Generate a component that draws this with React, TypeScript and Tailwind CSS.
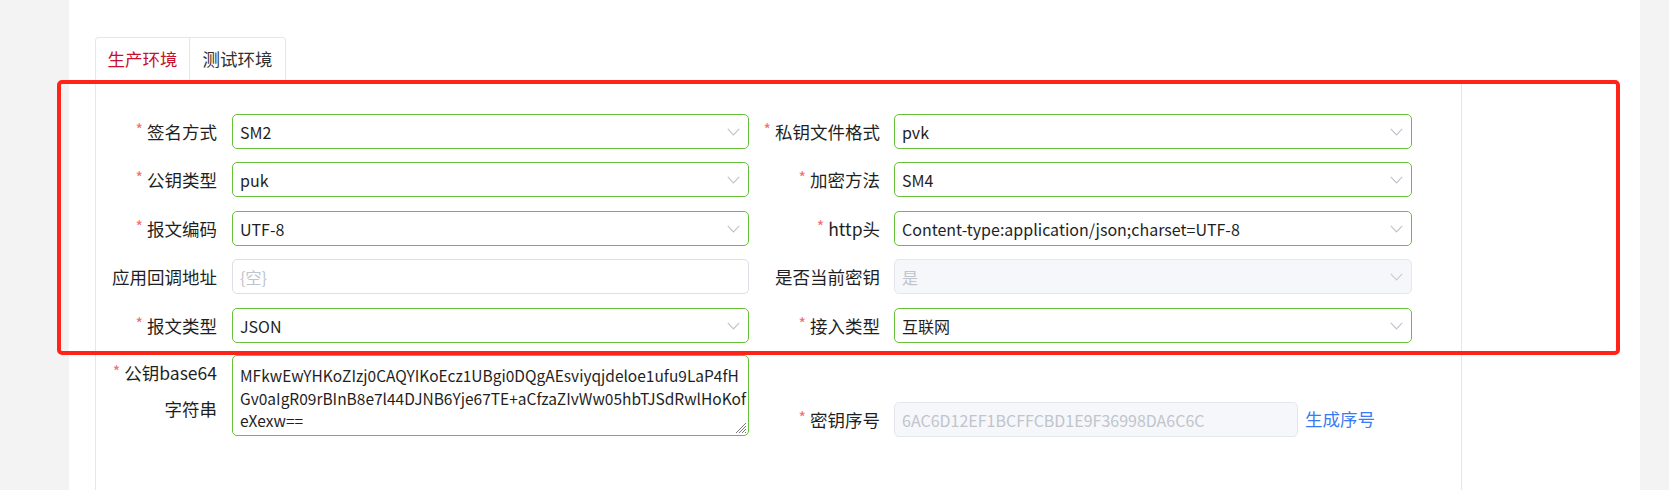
import React from "react";

const FONT = { fontFamily: '"Noto Sans CJK SC", "Microsoft YaHei", sans-serif' };

function Chevron({ muted }: { muted?: boolean }) {
  return (
    <svg width="13" height="8" viewBox="0 0 13 8" className="shrink-0">
      <polyline
        points="0.8,0.8 6.5,6.8 12.2,0.8"
        fill="none"
        stroke={muted ? "#c8ccd4" : "#c0c4cc"}
        strokeWidth="1.2"
      />
    </svg>
  );
}

function Label({ text, required, width, pr }: { text: string; required?: boolean; width: string; pr: string }) {
  return (
    <div className={`${width} ${pr} shrink-0 flex items-center justify-end text-[17.5px] text-[#1f1f1f] leading-[35px] whitespace-nowrap`}>
      {required && <span className="text-[#f56c6c] mr-[4px] text-[16px] relative top-[-2px]">*</span>}
      <span>{text}</span>
    </div>
  );
}

function Select({ value, width, disabled }: { value: string; width: string; disabled?: boolean }) {
  return (
    <div
      className={`${width} h-[35px] shrink-0 rounded-[5px] border flex items-center pl-[7px] pr-[8px] ${
        disabled ? "bg-[#f5f7fa] border-[#e4e7ed] text-[#c0c4cc]" : "bg-white border-[#67c23a] text-[#1f1f1f]"
      }`}
    >
      <span className="flex-1 text-[16px] whitespace-nowrap">{value}</span>
      <Chevron muted={disabled} />
    </div>
  );
}

function Row({ l, r, mt }: { l: React.ReactNode; r: React.ReactNode; mt: string }) {
  return (
    <div className={`flex h-[35px] ${mt}`}>
      {l}
      {r}
    </div>
  );
}

const LW = "w-[136px]";
const LP = "pr-[15px]";
const RW = "w-[145px]";
const RP = "pr-[14px]";
const IL = "w-[517px]";
const IR = "w-[518px]";

export default function App() {
  return (
    <div className="w-[1669px] h-[490px] bg-[#f3f3f3] overflow-hidden relative flex" style={FONT}>
      <div className="w-[69px] shrink-0" />
      <div className="w-[1571px] h-full bg-white pt-[37px] pl-[26px] flex flex-col">
        {/* tabs */}
        <div className="flex h-[43px]">
          <div className="w-[95px] h-full border border-b-0 border-[#e4e7ed] rounded-tl-[4px] flex items-center justify-center text-[17.5px] text-[#c8102e]">
            生产环境
          </div>
          <div className="w-[96px] h-full border border-l-0 border-b-0 border-[#e4e7ed] rounded-tr-[4px] flex items-center justify-center text-[17.5px] text-[#303133]">
            测试环境
          </div>
        </div>
        {/* panel */}
        <div className="w-[1367px] flex-1 border border-b-0 border-[#e4e7ed] pt-[33px]">
          <Row
            mt="mt-0"
            l={
              <>
                <Label text="签名方式" required width={LW} pr={LP} />
                <Select value="SM2" width={IL} />
              </>
            }
            r={
              <>
                <Label text="私钥文件格式" required width={RW} pr={RP} />
                <Select value="pvk" width={IR} />
              </>
            }
          />
          <Row
            mt="mt-[13px]"
            l={
              <>
                <Label text="公钥类型" required width={LW} pr={LP} />
                <Select value="puk" width={IL} />
              </>
            }
            r={
              <>
                <Label text="加密方法" required width={RW} pr={RP} />
                <Select value="SM4" width={IR} />
              </>
            }
          />
          <Row
            mt="mt-[14px]"
            l={
              <>
                <Label text="报文编码" required width={LW} pr={LP} />
                <Select value="UTF-8" width={IL} />
              </>
            }
            r={
              <>
                <Label text="http头" required width={RW} pr={RP} />
                <Select value="Content-type:application/json;charset=UTF-8" width={IR} />
              </>
            }
          />
          <Row
            mt="mt-[13px]"
            l={
              <>
                <Label text="应用回调地址" width={LW} pr={LP} />
                <div className="w-[517px] h-[35px] shrink-0 rounded-[5px] border border-[#dcdfe6] flex items-center pl-[7px] text-[16px] text-[#c0c4cc]">
                  {"{空}"}
                </div>
              </>
            }
            r={
              <>
                <Label text="是否当前密钥" width={RW} pr={RP} />
                <Select value="是" width={IR} disabled />
              </>
            }
          />
          <Row
            mt="mt-[14px]"
            l={
              <>
                <Label text="报文类型" required width={LW} pr={LP} />
                <Select value="JSON" width={IL} />
              </>
            }
            r={
              <>
                <Label text="接入类型" required width={RW} pr={RP} />
                <Select value="互联网" width={IR} />
              </>
            }
          />
          {/* textarea row */}
          <div className="flex mt-[12px]">
            <div className="w-[136px] pr-[15px] shrink-0 text-right text-[17.5px] text-[#1f1f1f] leading-[35px]">
              <div className="whitespace-nowrap">
                <span className="text-[#f56c6c] mr-[4px] text-[16px] relative top-[-2px]">*</span>
                公钥base64
              </div>
              <div>字符串</div>
            </div>
            <div className="w-[517px] h-[81px] shrink-0 rounded-[5px] border border-[#67c23a] relative pl-[7px] pt-[8px] text-[15.5px] leading-[22.5px] text-[#1f1f1f] overflow-hidden">
              <div className="whitespace-nowrap">MFkwEwYHKoZIzj0CAQYIKoEcz1UBgi0DQgAEsviyqjdeloe1ufu9LaP4fH</div>
              <div className="whitespace-nowrap">Gv0aIgR09rBInB8e7l44DJNB6Yje67TE+aCfzaZIvWw05hbTJSdRwlHoKof</div>
              <div className="whitespace-nowrap">eXexw==</div>
              <svg width="12" height="12" viewBox="0 0 12 12" className="absolute right-[1px] bottom-[1px]">
                <line x1="1" y1="11" x2="11" y2="1" stroke="#777" strokeWidth="1" />
                <line x1="4" y1="11" x2="11" y2="4" stroke="#777" strokeWidth="1" />
                <line x1="7" y1="11" x2="11" y2="7" stroke="#777" strokeWidth="1" />
                <line x1="10" y1="11" x2="11" y2="10" stroke="#777" strokeWidth="1" />
              </svg>
            </div>
            <div className="flex items-center mt-[47px] h-[35px]">
              <Label text="密钥序号" required width={RW} pr={RP} />
              <div className="w-[404px] h-[35px] shrink-0 rounded-[5px] border border-[#e4e7ed] bg-[#f5f7fa] flex items-center pl-[7px] text-[16px] text-[#c0c4cc]">
                6AC6D12EF1BCFFCBD1E9F36998DA6C6C
              </div>
              <span className="ml-[7px] text-[17.5px] text-[#3a7bf5] whitespace-nowrap">生成序号</span>
            </div>
          </div>
        </div>
      </div>
      {/* red annotation rectangle */}
      <div className="absolute left-[57px] top-[80px] w-[1563px] h-[275px] border-[4px] border-[#ff2418] rounded-[5px] pointer-events-none" />
    </div>
  );
}
